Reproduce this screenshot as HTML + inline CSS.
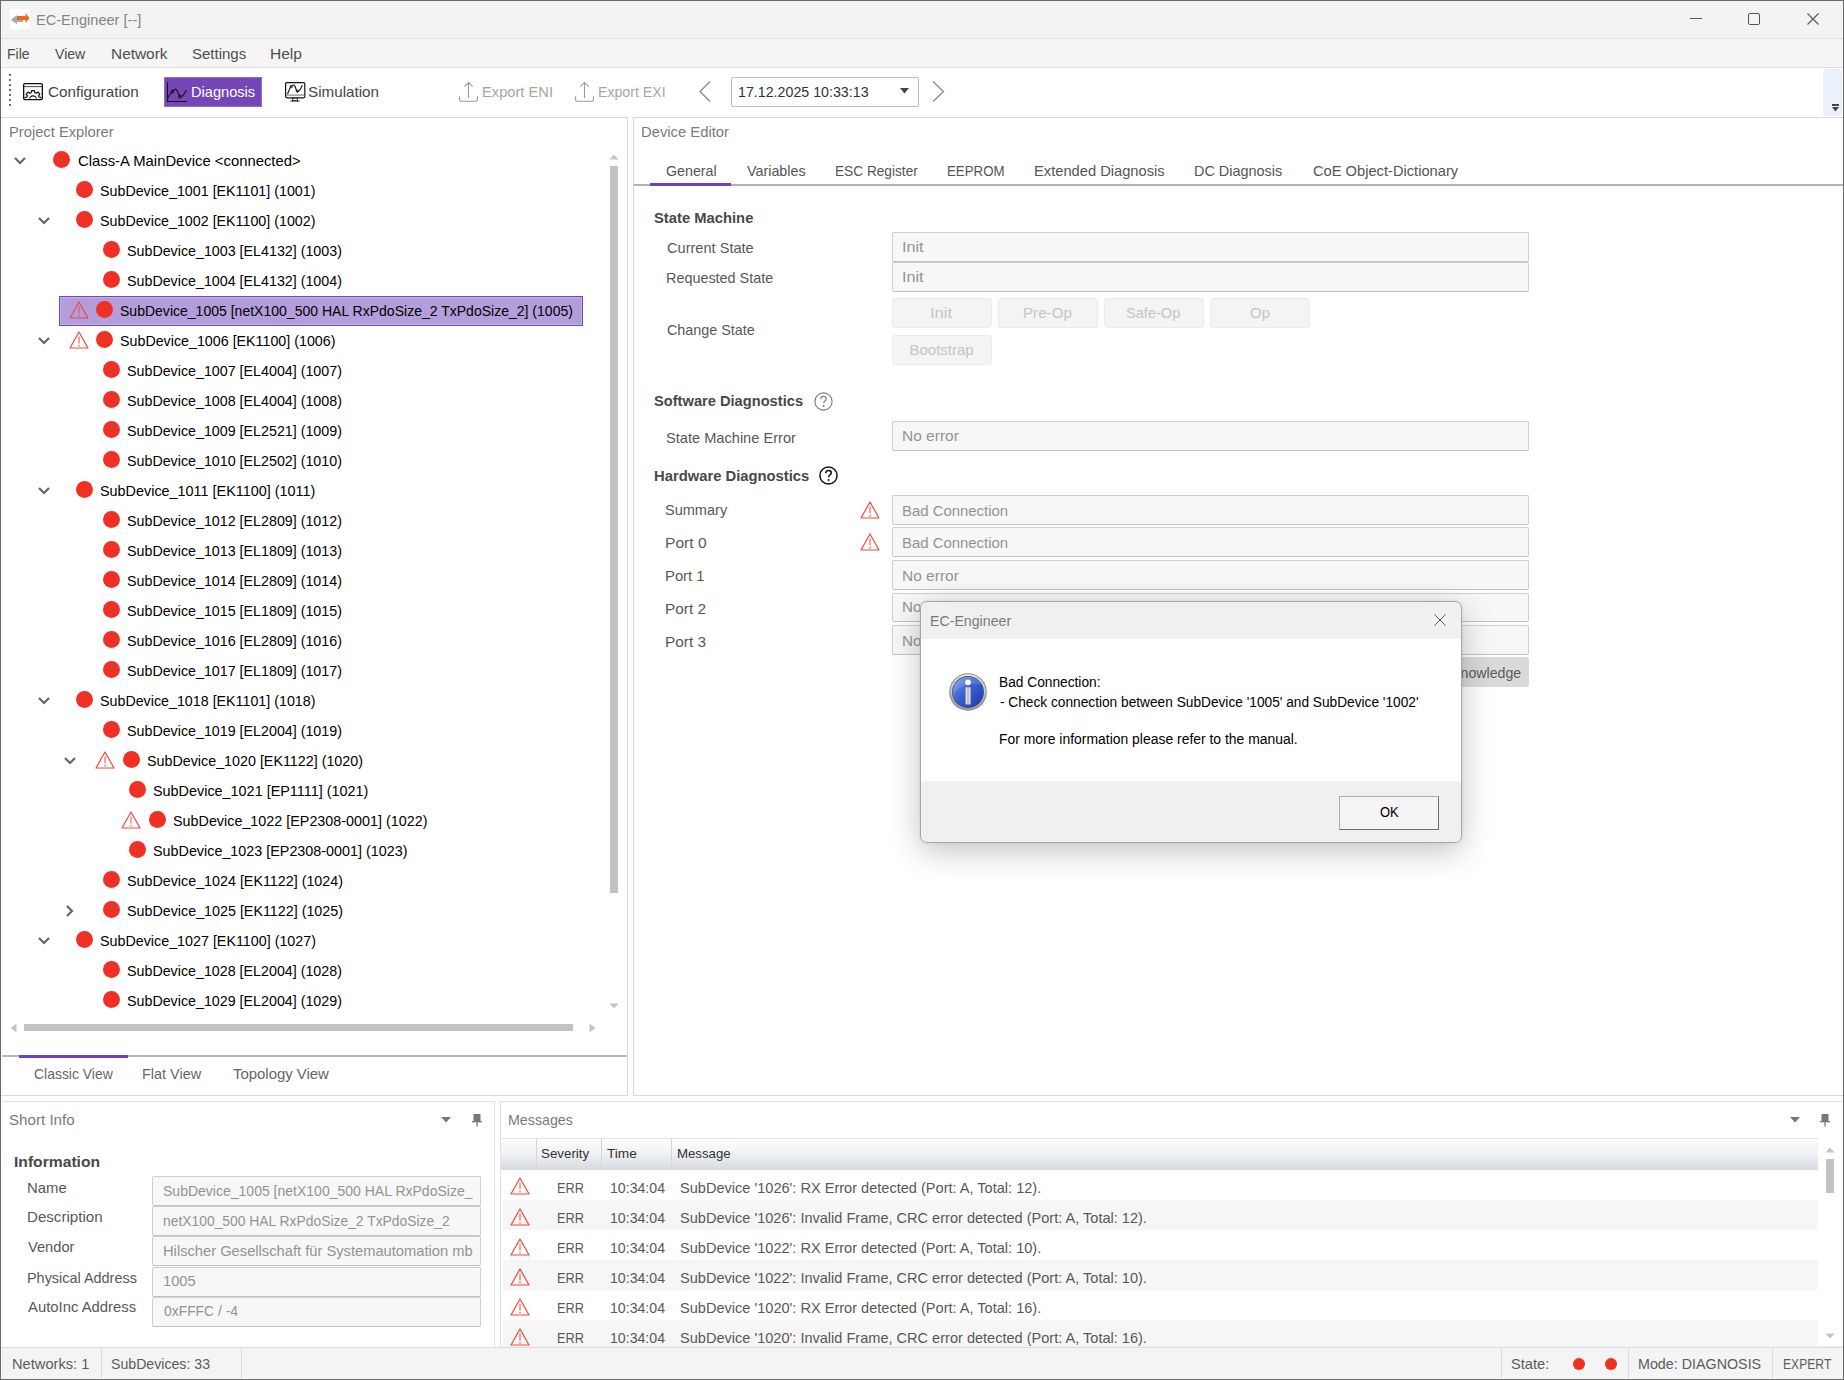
<!DOCTYPE html>
<html><head><meta charset="utf-8"><title>EC-Engineer</title>
<style>
html,body{margin:0;padding:0;}
body{width:1844px;height:1380px;position:relative;overflow:hidden;background:#ffffff;font-family:'Liberation Sans', sans-serif;}
.t{position:absolute;white-space:pre;transform-origin:0 0;font-family:'Liberation Sans', sans-serif;}
svg{overflow:visible}
</style></head><body>
<div style="position:absolute;left:0px;top:0px;width:1844px;height:39px;background:#f3f3f3"></div>
<div style="position:absolute;left:0px;top:38px;width:1844px;height:1px;background:#dfdfdf"></div>
<div style="position:absolute;left:0px;top:39px;width:1844px;height:28px;background:#f5f5f5"></div>
<div style="position:absolute;left:0px;top:67px;width:1844px;height:1px;background:#dfdfdf"></div>
<div style="position:absolute;left:0px;top:68px;width:1844px;height:49px;background:#ffffff"></div>
<div style="position:absolute;left:0px;top:1347px;width:1844px;height:33px;background:#f3f3f3"></div>
<div style="position:absolute;left:0px;top:1347px;width:1844px;height:1px;background:#dcdcdc"></div>
<div style="position:absolute;left:10px;top:9px;width:20px;height:20px;background:#ffffff"></div>
<svg style="position:absolute;left:10px;top:9px;" width="20" height="20" viewBox="0 0 20 20"><path d="M1 10.8 L7 6 L7 10 L13 10 L13 13 L7 13 L7 15.2 Z" fill="#a7abb0"/><path d="M7 7 H15.5 V4 L19.5 9 L15.5 14 V11 H7 Z" fill="#ea6a1f"/></svg>
<div class="t" style="left:36.03px;top:12.00px;font-size:15px;line-height:15px;color:#858585;transform:scaleX(0.9720);">EC-Engineer [--]</div>
<div style="position:absolute;left:1690px;top:18px;width:12px;height:1px;background:#555"></div>
<div style="position:absolute;left:1748px;top:13px;width:12px;height:12px;border:1px solid #555;border-radius:2px;box-sizing:border-box"></div>
<svg style="position:absolute;left:1807px;top:13px;" width="12" height="12" viewBox="0 0 12 12"><path d="M0.5 0.5 L11.5 11.5 M11.5 0.5 L0.5 11.5" stroke="#555" stroke-width="1.1" fill="none"/></svg>
<div class="t" style="left:7.07px;top:46.00px;font-size:15px;line-height:15px;color:#4d4d4d;transform:scaleX(0.9348);">File</div>
<div class="t" style="left:55.00px;top:46.00px;font-size:15px;line-height:15px;color:#4d4d4d;transform:scaleX(0.9394);">View</div>
<div class="t" style="left:110.97px;top:46.00px;font-size:15px;line-height:15px;color:#4d4d4d;transform:scaleX(1.0278);">Network</div>
<div class="t" style="left:192.00px;top:46.00px;font-size:15px;line-height:15px;color:#4d4d4d;transform:scaleX(1.0000);">Settings</div>
<div class="t" style="left:269.97px;top:46.00px;font-size:15px;line-height:15px;color:#4d4d4d;transform:scaleX(1.0333);">Help</div>
<div style="position:absolute;left:9px;top:74px;width:2px;height:2px;background:#6e6e6e"></div>
<div style="position:absolute;left:9px;top:79px;width:2px;height:2px;background:#6e6e6e"></div>
<div style="position:absolute;left:9px;top:84px;width:2px;height:2px;background:#6e6e6e"></div>
<div style="position:absolute;left:9px;top:89px;width:2px;height:2px;background:#6e6e6e"></div>
<div style="position:absolute;left:9px;top:94px;width:2px;height:2px;background:#6e6e6e"></div>
<div style="position:absolute;left:9px;top:99px;width:2px;height:2px;background:#6e6e6e"></div>
<div style="position:absolute;left:9px;top:104px;width:2px;height:2px;background:#6e6e6e"></div>
<svg style="position:absolute;left:23px;top:83px;" width="20" height="17" viewBox="0 0 20 17"><defs><clipPath id="cbx"><rect x="1.5" y="4" width="17" height="11.6"/></clipPath></defs><rect x="0.65" y="0.65" width="18.7" height="15.9" rx="1.2" fill="none" stroke="#111" stroke-width="1.3"/><line x1="1" y1="3.6" x2="19" y2="3.6" stroke="#333" stroke-width="0.9"/><g clip-path="url(#cbx)"><path d="M3.70 17.01 L3.85 17.66 L1.73 17.36 L1.73 14.44 L3.85 14.14 L4.40 12.80 L3.12 11.08 L5.18 9.02 L6.90 10.30 L8.24 9.75 L8.54 7.63 L11.46 7.63 L11.76 9.75 L13.10 10.30 L14.82 9.02 L16.88 11.08 L15.60 12.80 L16.15 14.14 L18.27 14.44 L18.27 17.36 L16.15 17.66 L16.30 17.01" fill="none" stroke="#111" stroke-width="1.15" stroke-linejoin="round"/><path d="M6.4 16.5 A3.6 3.6 0 0 1 13.6 16.5" fill="none" stroke="#111" stroke-width="1.1"/></g></svg>
<div class="t" style="left:48.00px;top:84.00px;font-size:15px;line-height:15px;color:#454545;transform:scaleX(1.0169);">Configuration</div>
<div style="position:absolute;left:164px;top:77px;width:98px;height:30px;background:#7546b8;box-sizing:border-box;border:1px solid #8e6cc8"></div>
<svg style="position:absolute;left:167px;top:82px;" width="21" height="21" viewBox="0 0 21 21"><path d="M0.5 0 V19.5 H20" fill="none" stroke="#111" stroke-width="1.1"/><path d="M0.7 16.3 C2 13.5 3.8 10.8 5.3 9.6 C6.5 8.2 7.6 7.4 8.4 7.4 C10 7.4 11 10 12 12.5 C12.6 14.2 13.3 14.9 14 14.6 C16 14 18 11 19.5 8" fill="none" stroke="#111" stroke-width="1.1"/><circle cx="5.3" cy="9.6" r="1.4" fill="none" stroke="#111" stroke-width="1"/><circle cx="12.8" cy="14.7" r="1.4" fill="none" stroke="#111" stroke-width="1"/></svg>
<div class="t" style="left:191.03px;top:84.00px;font-size:15px;line-height:15px;color:#ffffff;transform:scaleX(0.9738);">Diagnosis</div>
<svg style="position:absolute;left:285px;top:82px;" width="21" height="21" viewBox="0 0 21 21"><rect x="0.6" y="0.6" width="19.2" height="15.2" rx="1.2" fill="none" stroke="#111" stroke-width="1.2"/><line x1="1" y1="13.1" x2="19.4" y2="13.1" stroke="#777" stroke-width="1.1"/><path d="M2.5 12 L5.3 5.6 C6.3 3.6 7.3 3 8.4 3 C10 3 10.5 5 11 7 C11.5 9 12 10 13 9.5 C14.5 9 16 6 17.4 3.2" fill="none" stroke="#111" stroke-width="1.1"/><circle cx="6.3" cy="4.6" r="1.1" fill="none" stroke="#111" stroke-width="0.9"/><circle cx="12.3" cy="9" r="1.1" fill="none" stroke="#111" stroke-width="0.9"/><rect x="7.5" y="16" width="5" height="2.6" fill="none" stroke="#333" stroke-width="1"/><line x1="5.2" y1="19.1" x2="14.8" y2="19.1" stroke="#333" stroke-width="1"/></svg>
<div class="t" style="left:307.99px;top:84.00px;font-size:15px;line-height:15px;color:#454545;transform:scaleX(1.0145);">Simulation</div>
<svg style="position:absolute;left:459px;top:82px;" width="19" height="20" viewBox="0 0 19 20"><path d="M9.5 0.8 V16.1 M5.3 4.6 L9.5 0.5 L13.7 4.6" fill="none" stroke="#9c9c9c" stroke-width="1.1"/><path d="M0.6 14.3 V17.8 Q0.6 19.3 2.1 19.3 H16.9 Q18.4 19.3 18.4 17.8 V14.3" fill="none" stroke="#9c9c9c" stroke-width="1.1"/></svg>
<svg style="position:absolute;left:575px;top:82px;" width="19" height="20" viewBox="0 0 19 20"><path d="M9.5 0.8 V16.1 M5.3 4.6 L9.5 0.5 L13.7 4.6" fill="none" stroke="#9c9c9c" stroke-width="1.1"/><path d="M0.6 14.3 V17.8 Q0.6 19.3 2.1 19.3 H16.9 Q18.4 19.3 18.4 17.8 V14.3" fill="none" stroke="#9c9c9c" stroke-width="1.1"/></svg>
<div class="t" style="left:481.52px;top:84.00px;font-size:15px;line-height:15px;color:#a6a6a6;transform:scaleX(0.9786);">Export ENI</div>
<div class="t" style="left:598.06px;top:84.00px;font-size:15px;line-height:15px;color:#a6a6a6;transform:scaleX(0.9429);">Export EXI</div>
<svg style="position:absolute;left:699px;top:81px;" width="12" height="21" viewBox="0 0 12 21"><path d="M11 0.5 L1 10.5 L11 20.5" fill="none" stroke="#8a8a8a" stroke-width="1.3"/></svg>
<svg style="position:absolute;left:932px;top:81px;" width="13" height="21" viewBox="0 0 13 21"><path d="M1 0.5 L11.5 10.5 L1 20.5" fill="none" stroke="#8a8a8a" stroke-width="1.3"/></svg>
<div style="position:absolute;left:731px;top:77px;width:188px;height:30px;border:1px solid #bdbdbd;border-radius:2px;box-sizing:border-box;background:#fff"></div>
<div class="t" style="left:738.05px;top:84.00px;font-size:15px;line-height:15px;color:#333;transform:scaleX(0.9485);">17.12.2025 10:33:13</div>
<svg style="position:absolute;left:900px;top:88px;" width="9" height="6" viewBox="0 0 9 6"><path d="M0 0 H9 L4.5 5.5 Z" fill="#444"/></svg>
<div style="position:absolute;left:1823px;top:69px;width:19px;height:47px;background:#eaf1fb;border-radius:3px"></div>
<div style="position:absolute;left:1832px;top:104px;width:7px;height:1.5px;background:#444"></div>
<svg style="position:absolute;left:1832px;top:107px;" width="7" height="5" viewBox="0 0 7 5"><path d="M0 0 H7 L3.5 4.5 Z" fill="#444"/></svg>
<div style="position:absolute;left:0px;top:117px;width:628px;height:1px;background:#dadada"></div>
<div style="position:absolute;left:627px;top:117px;width:1px;height:979px;background:#dadada"></div>
<div style="position:absolute;left:0px;top:1095px;width:628px;height:1px;background:#dadada"></div>
<div class="t" style="left:9.02px;top:124.00px;font-size:15px;line-height:15px;color:#7a7a7a;transform:scaleX(0.9811);">Project Explorer</div>
<div style="position:absolute;left:59px;top:296px;width:524px;height:30px;background:#b39ddb;border:1px solid #7446b8;box-sizing:border-box;box-shadow:inset 0 0 0 1px #c4b2e4"></div>
<svg style="position:absolute;left:14px;top:157px;" width="12" height="8" viewBox="0 0 12 8"><path d="M1 1 L6 6 L11 1" fill="none" stroke="#666" stroke-width="2.2"/></svg>
<div style="position:absolute;left:52.5px;top:151.0px;width:17px;height:17px;background:#ee3124;border-radius:50%"></div>
<div class="t" style="left:77.50px;top:153.00px;font-size:15px;line-height:15px;color:#000;transform:scaleX(0.9889);">Class-A MainDevice &lt;connected&gt;</div>
<div style="position:absolute;left:76.0px;top:181.0px;width:17px;height:17px;background:#ee3124;border-radius:50%"></div>
<div class="t" style="left:100.30px;top:183.00px;font-size:15px;line-height:15px;color:#000;transform:scaleX(0.9511);">SubDevice_1001 [EK1101] (1001)</div>
<svg style="position:absolute;left:37.6px;top:217px;" width="12" height="8" viewBox="0 0 12 8"><path d="M1 1 L6 6 L11 1" fill="none" stroke="#666" stroke-width="2.2"/></svg>
<div style="position:absolute;left:76.0px;top:211.0px;width:17px;height:17px;background:#ee3124;border-radius:50%"></div>
<div class="t" style="left:100.30px;top:213.00px;font-size:15px;line-height:15px;color:#000;transform:scaleX(0.9511);">SubDevice_1002 [EK1100] (1002)</div>
<div style="position:absolute;left:102.5px;top:241.0px;width:17px;height:17px;background:#ee3124;border-radius:50%"></div>
<div class="t" style="left:126.55px;top:243.00px;font-size:15px;line-height:15px;color:#000;transform:scaleX(0.9509);">SubDevice_1003 [EL4132] (1003)</div>
<div style="position:absolute;left:102.5px;top:271.0px;width:17px;height:17px;background:#ee3124;border-radius:50%"></div>
<div class="t" style="left:126.55px;top:273.00px;font-size:15px;line-height:15px;color:#000;transform:scaleX(0.9509);">SubDevice_1004 [EL4132] (1004)</div>
<svg style="position:absolute;left:68.9px;top:301px;" width="20" height="18" viewBox="0 0 20 18"><path d="M10.0 1 L19 17 L1 17 Z" fill="none" stroke="#ee4a3a" stroke-width="1.2" stroke-linejoin="round"/><line x1="10.0" y1="5.5" x2="10.0" y2="12.5" stroke="#ee4a3a" stroke-width="1"/><circle cx="10.0" cy="14.8" r="0.8" fill="#ee4a3a"/></svg>
<div style="position:absolute;left:96.0px;top:301.0px;width:17px;height:17px;background:#ee3124;border-radius:50%"></div>
<div class="t" style="left:120.37px;top:303.00px;font-size:15px;line-height:15px;color:#000;transform:scaleX(0.9348);">SubDevice_1005 [netX100_500 HAL RxPdoSize_2 TxPdoSize_2] (1005)</div>
<svg style="position:absolute;left:37.6px;top:337px;" width="12" height="8" viewBox="0 0 12 8"><path d="M1 1 L6 6 L11 1" fill="none" stroke="#666" stroke-width="2.2"/></svg>
<svg style="position:absolute;left:68.9px;top:331px;" width="20" height="18" viewBox="0 0 20 18"><path d="M10.0 1 L19 17 L1 17 Z" fill="none" stroke="#ee4a3a" stroke-width="1.2" stroke-linejoin="round"/><line x1="10.0" y1="5.5" x2="10.0" y2="12.5" stroke="#ee4a3a" stroke-width="1"/><circle cx="10.0" cy="14.8" r="0.8" fill="#ee4a3a"/></svg>
<div style="position:absolute;left:96.0px;top:331.0px;width:17px;height:17px;background:#ee3124;border-radius:50%"></div>
<div class="t" style="left:120.35px;top:333.00px;font-size:15px;line-height:15px;color:#000;transform:scaleX(0.9511);">SubDevice_1006 [EK1100] (1006)</div>
<div style="position:absolute;left:102.5px;top:361.0px;width:17px;height:17px;background:#ee3124;border-radius:50%"></div>
<div class="t" style="left:126.55px;top:363.00px;font-size:15px;line-height:15px;color:#000;transform:scaleX(0.9509);">SubDevice_1007 [EL4004] (1007)</div>
<div style="position:absolute;left:102.5px;top:391.0px;width:17px;height:17px;background:#ee3124;border-radius:50%"></div>
<div class="t" style="left:126.55px;top:393.00px;font-size:15px;line-height:15px;color:#000;transform:scaleX(0.9509);">SubDevice_1008 [EL4004] (1008)</div>
<div style="position:absolute;left:102.5px;top:421.0px;width:17px;height:17px;background:#ee3124;border-radius:50%"></div>
<div class="t" style="left:126.55px;top:423.00px;font-size:15px;line-height:15px;color:#000;transform:scaleX(0.9509);">SubDevice_1009 [EL2521] (1009)</div>
<div style="position:absolute;left:102.5px;top:451.0px;width:17px;height:17px;background:#ee3124;border-radius:50%"></div>
<div class="t" style="left:126.55px;top:453.00px;font-size:15px;line-height:15px;color:#000;transform:scaleX(0.9509);">SubDevice_1010 [EL2502] (1010)</div>
<svg style="position:absolute;left:37.6px;top:487px;" width="12" height="8" viewBox="0 0 12 8"><path d="M1 1 L6 6 L11 1" fill="none" stroke="#666" stroke-width="2.2"/></svg>
<div style="position:absolute;left:76.0px;top:481.0px;width:17px;height:17px;background:#ee3124;border-radius:50%"></div>
<div class="t" style="left:100.29px;top:483.00px;font-size:15px;line-height:15px;color:#000;transform:scaleX(0.9596);">SubDevice_1011 [EK1100] (1011)</div>
<div style="position:absolute;left:102.5px;top:511.0px;width:17px;height:17px;background:#ee3124;border-radius:50%"></div>
<div class="t" style="left:126.55px;top:513.00px;font-size:15px;line-height:15px;color:#000;transform:scaleX(0.9509);">SubDevice_1012 [EL2809] (1012)</div>
<div style="position:absolute;left:102.5px;top:541.0px;width:17px;height:17px;background:#ee3124;border-radius:50%"></div>
<div class="t" style="left:126.55px;top:543.00px;font-size:15px;line-height:15px;color:#000;transform:scaleX(0.9509);">SubDevice_1013 [EL1809] (1013)</div>
<div style="position:absolute;left:102.5px;top:571.0px;width:17px;height:17px;background:#ee3124;border-radius:50%"></div>
<div class="t" style="left:126.55px;top:573.00px;font-size:15px;line-height:15px;color:#000;transform:scaleX(0.9509);">SubDevice_1014 [EL2809] (1014)</div>
<div style="position:absolute;left:102.5px;top:601.0px;width:17px;height:17px;background:#ee3124;border-radius:50%"></div>
<div class="t" style="left:126.55px;top:603.00px;font-size:15px;line-height:15px;color:#000;transform:scaleX(0.9509);">SubDevice_1015 [EL1809] (1015)</div>
<div style="position:absolute;left:102.5px;top:631.0px;width:17px;height:17px;background:#ee3124;border-radius:50%"></div>
<div class="t" style="left:126.55px;top:633.00px;font-size:15px;line-height:15px;color:#000;transform:scaleX(0.9509);">SubDevice_1016 [EL2809] (1016)</div>
<div style="position:absolute;left:102.5px;top:661.0px;width:17px;height:17px;background:#ee3124;border-radius:50%"></div>
<div class="t" style="left:126.55px;top:663.00px;font-size:15px;line-height:15px;color:#000;transform:scaleX(0.9509);">SubDevice_1017 [EL1809] (1017)</div>
<svg style="position:absolute;left:37.6px;top:697px;" width="12" height="8" viewBox="0 0 12 8"><path d="M1 1 L6 6 L11 1" fill="none" stroke="#666" stroke-width="2.2"/></svg>
<div style="position:absolute;left:76.0px;top:691.0px;width:17px;height:17px;background:#ee3124;border-radius:50%"></div>
<div class="t" style="left:100.30px;top:693.00px;font-size:15px;line-height:15px;color:#000;transform:scaleX(0.9511);">SubDevice_1018 [EK1101] (1018)</div>
<div style="position:absolute;left:102.5px;top:721.0px;width:17px;height:17px;background:#ee3124;border-radius:50%"></div>
<div class="t" style="left:126.55px;top:723.00px;font-size:15px;line-height:15px;color:#000;transform:scaleX(0.9509);">SubDevice_1019 [EL2004] (1019)</div>
<svg style="position:absolute;left:64px;top:757px;" width="12" height="8" viewBox="0 0 12 8"><path d="M1 1 L6 6 L11 1" fill="none" stroke="#666" stroke-width="2.2"/></svg>
<svg style="position:absolute;left:95.0px;top:751px;" width="20" height="18" viewBox="0 0 20 18"><path d="M10.0 1 L19 17 L1 17 Z" fill="none" stroke="#ee4a3a" stroke-width="1.2" stroke-linejoin="round"/><line x1="10.0" y1="5.5" x2="10.0" y2="12.5" stroke="#ee4a3a" stroke-width="1"/><circle cx="10.0" cy="14.8" r="0.8" fill="#ee4a3a"/></svg>
<div style="position:absolute;left:122.5px;top:751.0px;width:17px;height:17px;background:#ee3124;border-radius:50%"></div>
<div class="t" style="left:146.55px;top:753.00px;font-size:15px;line-height:15px;color:#000;transform:scaleX(0.9533);">SubDevice_1020 [EK1122] (1020)</div>
<div style="position:absolute;left:128.5px;top:781.0px;width:17px;height:17px;background:#ee3124;border-radius:50%"></div>
<div class="t" style="left:152.84px;top:783.00px;font-size:15px;line-height:15px;color:#000;transform:scaleX(0.9596);">SubDevice_1021 [EP1111] (1021)</div>
<svg style="position:absolute;left:121.0px;top:811px;" width="20" height="18" viewBox="0 0 20 18"><path d="M10.0 1 L19 17 L1 17 Z" fill="none" stroke="#ee4a3a" stroke-width="1.2" stroke-linejoin="round"/><line x1="10.0" y1="5.5" x2="10.0" y2="12.5" stroke="#ee4a3a" stroke-width="1"/><circle cx="10.0" cy="14.8" r="0.8" fill="#ee4a3a"/></svg>
<div style="position:absolute;left:148.5px;top:811.0px;width:17px;height:17px;background:#ee3124;border-radius:50%"></div>
<div class="t" style="left:172.54px;top:813.00px;font-size:15px;line-height:15px;color:#000;transform:scaleX(0.9564);">SubDevice_1022 [EP2308-0001] (1022)</div>
<div style="position:absolute;left:128.5px;top:841.0px;width:17px;height:17px;background:#ee3124;border-radius:50%"></div>
<div class="t" style="left:152.84px;top:843.00px;font-size:15px;line-height:15px;color:#000;transform:scaleX(0.9564);">SubDevice_1023 [EP2308-0001] (1023)</div>
<div style="position:absolute;left:102.5px;top:871.0px;width:17px;height:17px;background:#ee3124;border-radius:50%"></div>
<div class="t" style="left:126.55px;top:873.00px;font-size:15px;line-height:15px;color:#000;transform:scaleX(0.9533);">SubDevice_1024 [EK1122] (1024)</div>
<svg style="position:absolute;left:66px;top:904.5px;" width="8" height="12" viewBox="0 0 8 12"><path d="M1 1 L6 6 L1 11" fill="none" stroke="#666" stroke-width="2.2"/></svg>
<div style="position:absolute;left:102.5px;top:901.0px;width:17px;height:17px;background:#ee3124;border-radius:50%"></div>
<div class="t" style="left:126.55px;top:903.00px;font-size:15px;line-height:15px;color:#000;transform:scaleX(0.9533);">SubDevice_1025 [EK1122] (1025)</div>
<svg style="position:absolute;left:37.6px;top:937px;" width="12" height="8" viewBox="0 0 12 8"><path d="M1 1 L6 6 L11 1" fill="none" stroke="#666" stroke-width="2.2"/></svg>
<div style="position:absolute;left:76.0px;top:931.0px;width:17px;height:17px;background:#ee3124;border-radius:50%"></div>
<div class="t" style="left:100.30px;top:933.00px;font-size:15px;line-height:15px;color:#000;transform:scaleX(0.9533);">SubDevice_1027 [EK1100] (1027)</div>
<div style="position:absolute;left:102.5px;top:961.0px;width:17px;height:17px;background:#ee3124;border-radius:50%"></div>
<div class="t" style="left:126.55px;top:963.00px;font-size:15px;line-height:15px;color:#000;transform:scaleX(0.9509);">SubDevice_1028 [EL2004] (1028)</div>
<div style="position:absolute;left:102.5px;top:991.0px;width:17px;height:17px;background:#ee3124;border-radius:50%"></div>
<div class="t" style="left:126.55px;top:993.00px;font-size:15px;line-height:15px;color:#000;transform:scaleX(0.9509);">SubDevice_1029 [EL2004] (1029)</div>
<svg style="position:absolute;left:609px;top:154px;" width="10" height="6" viewBox="0 0 10 6"><path d="M0.5 5.5 L5 0.5 L9.5 5.5 Z" fill="#c4c4c4"/></svg>
<div style="position:absolute;left:610px;top:166px;width:8px;height:727px;background:#c2c2c2"></div>
<svg style="position:absolute;left:609px;top:1003px;" width="10" height="6" viewBox="0 0 10 6"><path d="M0.5 0.5 L5 5.5 L9.5 0.5 Z" fill="#c4c4c4"/></svg>
<svg style="position:absolute;left:10px;top:1023px;" width="7" height="10" viewBox="0 0 7 10"><path d="M6.5 0.5 L0.5 5 L6.5 9.5 Z" fill="#c4c4c4"/></svg>
<div style="position:absolute;left:24px;top:1024px;width:549px;height:7px;background:#c2c2c2"></div>
<svg style="position:absolute;left:589px;top:1023px;" width="7" height="10" viewBox="0 0 7 10"><path d="M0.5 0.5 L6.5 5 L0.5 9.5 Z" fill="#c4c4c4"/></svg>
<div style="position:absolute;left:2px;top:1055px;width:625px;height:2px;background:#b8b8b8"></div>
<div style="position:absolute;left:19px;top:1055px;width:109px;height:3px;background:#6f3fc0"></div>
<div class="t" style="left:33.70px;top:1066.00px;font-size:15px;line-height:15px;color:#666;transform:scaleX(0.9294);">Classic View</div>
<div class="t" style="left:142.44px;top:1066.00px;font-size:15px;line-height:15px;color:#666;transform:scaleX(0.9639);">Flat View</div>
<div class="t" style="left:232.60px;top:1066.00px;font-size:15px;line-height:15px;color:#666;transform:scaleX(0.9938);">Topology View</div>
<div style="position:absolute;left:633px;top:117px;width:1211px;height:1px;background:#dadada"></div>
<div style="position:absolute;left:633px;top:117px;width:1px;height:979px;background:#dadada"></div>
<div style="position:absolute;left:633px;top:1095px;width:1211px;height:1px;background:#dadada"></div>
<div class="t" style="left:641.01px;top:124.00px;font-size:15px;line-height:15px;color:#7a7a7a;transform:scaleX(0.9858);">Device Editor</div>
<div style="position:absolute;left:634px;top:184px;width:1210px;height:2px;background:#b3b3b3"></div>
<div style="position:absolute;left:650px;top:183px;width:81px;height:3px;background:#6f3fc0"></div>
<div class="t" style="left:665.50px;top:162.50px;font-size:15px;line-height:15px;color:#555555;transform:scaleX(0.9481);">General</div>
<div class="t" style="left:746.75px;top:162.50px;font-size:15px;line-height:15px;color:#555555;transform:scaleX(0.9549);">Variables</div>
<div class="t" style="left:834.59px;top:162.50px;font-size:15px;line-height:15px;color:#555555;transform:scaleX(0.9111);">ESC Register</div>
<div class="t" style="left:947.12px;top:162.50px;font-size:15px;line-height:15px;color:#555555;transform:scaleX(0.8849);">EEPROM</div>
<div class="t" style="left:1034.02px;top:162.50px;font-size:15px;line-height:15px;color:#555555;transform:scaleX(0.9792);">Extended Diagnosis</div>
<div class="t" style="left:1194.04px;top:162.50px;font-size:15px;line-height:15px;color:#555555;transform:scaleX(0.9615);">DC Diagnosis</div>
<div class="t" style="left:1313.00px;top:162.50px;font-size:15px;line-height:15px;color:#555555;transform:scaleX(0.9782);">CoE Object-Dictionary</div>
<div class="t" style="left:654.25px;top:209.50px;font-size:15px;line-height:15px;color:#484848;font-weight:700;transform:scaleX(0.9851);">State Machine</div>
<div class="t" style="left:666.75px;top:240.25px;font-size:15px;line-height:15px;color:#585858;transform:scaleX(0.9719);">Current State</div>
<div class="t" style="left:665.79px;top:269.60px;font-size:15px;line-height:15px;color:#585858;transform:scaleX(0.9595);">Requested State</div>
<div class="t" style="left:666.75px;top:322.00px;font-size:15px;line-height:15px;color:#585858;transform:scaleX(0.9565);">Change State</div>
<div style="position:absolute;left:892px;top:232px;width:637px;height:30px;background:#f7f7f7;border:1px solid #cfcfcf;border-bottom:1px solid #c3c3c3;border-radius:2px;box-sizing:border-box"></div>
<div class="t" style="left:902.32px;top:239.00px;font-size:15px;line-height:15px;color:#939393;transform:scaleX(1.0789);">Init</div>
<div style="position:absolute;left:892px;top:262px;width:637px;height:30px;background:#f7f7f7;border:1px solid #cfcfcf;border-bottom:1px solid #c3c3c3;border-radius:2px;box-sizing:border-box"></div>
<div class="t" style="left:902.32px;top:269.00px;font-size:15px;line-height:15px;color:#939393;transform:scaleX(1.0789);">Init</div>
<div style="position:absolute;left:892px;top:298px;width:100px;height:30px;background:#f4f4f4;border:1px solid #ebebeb;box-sizing:border-box;border-radius:3px"></div>
<div class="t" style="left:930.39px;top:305.00px;font-size:15px;line-height:15px;color:#c4c4c4;transform:scaleX(1.1053);">Init</div>
<div style="position:absolute;left:998px;top:298px;width:100px;height:30px;background:#f4f4f4;border:1px solid #ebebeb;box-sizing:border-box;border-radius:3px"></div>
<div class="t" style="left:1023.24px;top:305.00px;font-size:15px;line-height:15px;color:#c4c4c4;transform:scaleX(1.0106);">Pre-Op</div>
<div style="position:absolute;left:1104px;top:298px;width:100px;height:30px;background:#f4f4f4;border:1px solid #ebebeb;box-sizing:border-box;border-radius:3px"></div>
<div class="t" style="left:1126.28px;top:305.00px;font-size:15px;line-height:15px;color:#c4c4c4;transform:scaleX(0.9727);">Safe-Op</div>
<div style="position:absolute;left:1210px;top:298px;width:100px;height:30px;background:#f4f4f4;border:1px solid #ebebeb;box-sizing:border-box;border-radius:3px"></div>
<div class="t" style="left:1250.00px;top:305.00px;font-size:15px;line-height:15px;color:#c4c4c4;transform:scaleX(1.0000);">Op</div>
<div style="position:absolute;left:892px;top:335px;width:100px;height:30px;background:#f4f4f4;border:1px solid #ebebeb;box-sizing:border-box;border-radius:3px"></div>
<div class="t" style="left:909.50px;top:342.00px;font-size:15px;line-height:15px;color:#c4c4c4;transform:scaleX(1.0000);">Bootstrap</div>
<div class="t" style="left:654.00px;top:393.00px;font-size:15px;line-height:15px;color:#484848;font-weight:700;transform:scaleX(0.9770);">Software Diagnostics</div>
<svg style="position:absolute;left:813.5px;top:391.5px;" width="19" height="19" viewBox="0 0 19 19"><circle cx="9.5" cy="9.5" r="8.6" fill="none" stroke="#7a7a7a" stroke-width="1.1"/><path d="M6.7 7.3 C6.7 5.2 8 4.4 9.5 4.4 C11.1 4.4 12.3 5.4 12.3 6.9 C12.3 8.6 9.6 9.0 9.6 11.2" fill="none" stroke="#7a7a7a" stroke-width="1.1"/><circle cx="9.6" cy="13.9" r="1" fill="#7a7a7a"/></svg>
<div class="t" style="left:665.78px;top:429.50px;font-size:15px;line-height:15px;color:#585858;transform:scaleX(0.9737);">State Machine Error</div>
<div style="position:absolute;left:892px;top:421px;width:637px;height:30px;background:#f7f7f7;border:1px solid #cfcfcf;border-bottom:1px solid #c3c3c3;border-radius:2px;box-sizing:border-box"></div>
<div class="t" style="left:902.37px;top:428.00px;font-size:15px;line-height:15px;color:#939393;transform:scaleX(1.0333);">No error</div>
<div class="t" style="left:653.51px;top:468.00px;font-size:15px;line-height:15px;color:#484848;font-weight:700;transform:scaleX(0.9853);">Hardware Diagnostics</div>
<svg style="position:absolute;left:818.5px;top:465.5px;" width="19" height="19" viewBox="0 0 19 19"><circle cx="9.5" cy="9.5" r="8.6" fill="none" stroke="#111" stroke-width="1.5"/><path d="M6.7 7.3 C6.7 5.2 8 4.4 9.5 4.4 C11.1 4.4 12.3 5.4 12.3 6.9 C12.3 8.6 9.6 9.0 9.6 11.2" fill="none" stroke="#111" stroke-width="1.5"/><circle cx="9.6" cy="13.9" r="1" fill="#111"/></svg>
<div class="t" style="left:665.33px;top:502.00px;font-size:15px;line-height:15px;color:#585858;transform:scaleX(0.9683);">Summary</div>
<div class="t" style="left:665.26px;top:535.20px;font-size:15px;line-height:15px;color:#585858;transform:scaleX(1.0385);">Port 0</div>
<div class="t" style="left:665.31px;top:568.10px;font-size:15px;line-height:15px;color:#585858;transform:scaleX(0.9872);">Port 1</div>
<div class="t" style="left:665.27px;top:600.80px;font-size:15px;line-height:15px;color:#585858;transform:scaleX(1.0256);">Port 2</div>
<div class="t" style="left:665.27px;top:633.70px;font-size:15px;line-height:15px;color:#585858;transform:scaleX(1.0256);">Port 3</div>
<svg style="position:absolute;left:860.0px;top:501px;" width="20" height="18" viewBox="0 0 20 18"><path d="M10.0 1 L19 17 L1 17 Z" fill="none" stroke="#ee4a3a" stroke-width="1.2" stroke-linejoin="round"/><line x1="10.0" y1="5.5" x2="10.0" y2="12.5" stroke="#ee4a3a" stroke-width="1"/><circle cx="10.0" cy="14.8" r="0.8" fill="#ee4a3a"/></svg>
<svg style="position:absolute;left:860.0px;top:533px;" width="20" height="18" viewBox="0 0 20 18"><path d="M10.0 1 L19 17 L1 17 Z" fill="none" stroke="#ee4a3a" stroke-width="1.2" stroke-linejoin="round"/><line x1="10.0" y1="5.5" x2="10.0" y2="12.5" stroke="#ee4a3a" stroke-width="1"/><circle cx="10.0" cy="14.8" r="0.8" fill="#ee4a3a"/></svg>
<div style="position:absolute;left:892px;top:495px;width:637px;height:30px;background:#f7f7f7;border:1px solid #cfcfcf;border-bottom:1px solid #c3c3c3;border-radius:2px;box-sizing:border-box"></div>
<div class="t" style="left:902.01px;top:502.60px;font-size:15px;line-height:15px;color:#939393;transform:scaleX(0.9933);">Bad Connection</div>
<div style="position:absolute;left:892px;top:527px;width:637px;height:30px;background:#f7f7f7;border:1px solid #cfcfcf;border-bottom:1px solid #c3c3c3;border-radius:2px;box-sizing:border-box"></div>
<div class="t" style="left:902.01px;top:534.50px;font-size:15px;line-height:15px;color:#939393;transform:scaleX(0.9933);">Bad Connection</div>
<div style="position:absolute;left:892px;top:560px;width:637px;height:30px;background:#f7f7f7;border:1px solid #cfcfcf;border-bottom:1px solid #c3c3c3;border-radius:2px;box-sizing:border-box"></div>
<div class="t" style="left:901.97px;top:567.50px;font-size:15px;line-height:15px;color:#939393;transform:scaleX(1.0333);">No error</div>
<div style="position:absolute;left:892px;top:593px;width:637px;height:29px;background:#f7f7f7;border:1px solid #cfcfcf;border-bottom:1px solid #c3c3c3;border-radius:2px;box-sizing:border-box"></div>
<div class="t" style="left:901.99px;top:599.00px;font-size:15px;line-height:15px;color:#939393;transform:scaleX(1.0116);">Not available</div>
<div style="position:absolute;left:892px;top:625px;width:637px;height:30px;background:#f7f7f7;border:1px solid #cfcfcf;border-bottom:1px solid #c3c3c3;border-radius:2px;box-sizing:border-box"></div>
<div class="t" style="left:901.99px;top:633.00px;font-size:15px;line-height:15px;color:#939393;transform:scaleX(1.0116);">Not available</div>
<div style="position:absolute;left:1420px;top:657px;width:109px;height:30px;background:#dadada;border-radius:2px"></div>
<div class="t" style="left:1437.00px;top:665.00px;font-size:15px;line-height:15px;color:#5a5a5a;transform:scaleX(0.9438);">Acknowledge</div>
<div style="position:absolute;left:2px;top:1101px;width:493px;height:1px;background:#e1e1e1"></div>
<div style="position:absolute;left:494px;top:1101px;width:1px;height:246px;background:#e1e1e1"></div>
<div class="t" style="left:8.99px;top:1112.20px;font-size:15px;line-height:15px;color:#7a7a7a;transform:scaleX(1.0094);">Short Info</div>
<svg style="position:absolute;left:441px;top:1117px;" width="10" height="6" viewBox="0 0 10 6"><path d="M0 0 H10 L5 5.5 Z" fill="#777"/></svg>
<svg style="position:absolute;left:472px;top:1114px;" width="10" height="13" viewBox="0 0 10 13"><rect x="1.5" y="0" width="7" height="7" fill="#777"/><rect x="0" y="7" width="10" height="1.3" fill="#777"/><rect x="4.4" y="8" width="1.3" height="4.5" fill="#777"/></svg>
<div class="t" style="left:13.96px;top:1153.50px;font-size:15px;line-height:15px;color:#484848;font-weight:700;transform:scaleX(1.0432);">Information</div>
<div class="t" style="left:26.71px;top:1179.50px;font-size:15px;line-height:15px;color:#585858;transform:scaleX(0.9923);">Name</div>
<div style="position:absolute;left:152px;top:1176px;width:329px;height:30px;background:#f7f7f7;border:1px solid #cfcfcf;border-bottom-color:#c3c3c3;border-radius:2px;box-sizing:border-box;overflow:hidden">
</div>
<div style="position:absolute;left:153px;top:1176px;width:320px;height:29px;overflow:hidden"><div class="t" style="left:9.68px;top:7.30px;font-size:15px;line-height:15px;color:#939393;transform:scaleX(0.934);">SubDevice_1005 [netX100_500 HAL RxPdoSize_2 TxPdoSize_2] (1005)</div></div>
<div class="t" style="left:26.69px;top:1209.30px;font-size:15px;line-height:15px;color:#585858;transform:scaleX(1.0068);">Description</div>
<div style="position:absolute;left:152px;top:1206px;width:329px;height:30px;background:#f7f7f7;border:1px solid #cfcfcf;border-bottom-color:#c3c3c3;border-radius:2px;box-sizing:border-box;overflow:hidden">
</div>
<div class="t" style="left:162.88px;top:1213.10px;font-size:15px;line-height:15px;color:#939393;transform:scaleX(0.9239);">netX100_500 HAL RxPdoSize_2 TxPdoSize_2</div>
<div class="t" style="left:27.70px;top:1239.10px;font-size:15px;line-height:15px;color:#585858;transform:scaleX(0.9771);">Vendor</div>
<div style="position:absolute;left:152px;top:1236px;width:329px;height:30px;background:#f7f7f7;border:1px solid #cfcfcf;border-bottom-color:#c3c3c3;border-radius:2px;box-sizing:border-box;overflow:hidden">
</div>
<div style="position:absolute;left:153px;top:1236px;width:320px;height:29px;overflow:hidden"><div class="t" style="left:9.62px;top:7.00px;font-size:15px;line-height:15px;color:#939393;transform:scaleX(0.98);">Hilscher Gesellschaft für Systemautomation mbH</div></div>
<div class="t" style="left:26.74px;top:1269.50px;font-size:15px;line-height:15px;color:#585858;transform:scaleX(0.9619);">Physical Address</div>
<div style="position:absolute;left:152px;top:1267px;width:329px;height:30px;background:#f7f7f7;border:1px solid #cfcfcf;border-bottom-color:#c3c3c3;border-radius:2px;box-sizing:border-box;overflow:hidden">
</div>
<div class="t" style="left:162.82px;top:1272.80px;font-size:15px;line-height:15px;color:#939393;transform:scaleX(0.9812);">1005</div>
<div class="t" style="left:27.70px;top:1299.30px;font-size:15px;line-height:15px;color:#585858;transform:scaleX(0.9899);">AutoInc Address</div>
<div style="position:absolute;left:152px;top:1297px;width:329px;height:30px;background:#f7f7f7;border:1px solid #cfcfcf;border-bottom-color:#c3c3c3;border-radius:2px;box-sizing:border-box;overflow:hidden">
</div>
<div class="t" style="left:163.80px;top:1302.90px;font-size:15px;line-height:15px;color:#939393;transform:scaleX(0.9250);">0xFFFC / -4</div>
<div style="position:absolute;left:500px;top:1101px;width:1344px;height:1px;background:#e1e1e1"></div>
<div style="position:absolute;left:500px;top:1101px;width:1px;height:246px;background:#e1e1e1"></div>
<div class="t" style="left:508.35px;top:1112.00px;font-size:15px;line-height:15px;color:#7a7a7a;transform:scaleX(0.9493);">Messages</div>
<svg style="position:absolute;left:1789.5px;top:1117px;" width="10" height="6" viewBox="0 0 10 6"><path d="M0 0 H10 L5 5.5 Z" fill="#777"/></svg>
<svg style="position:absolute;left:1820px;top:1114px;" width="10" height="13" viewBox="0 0 10 13"><rect x="1.5" y="0" width="7" height="7" fill="#777"/><rect x="0" y="7" width="10" height="1.3" fill="#777"/><rect x="4.4" y="8" width="1.3" height="4.5" fill="#777"/></svg>
<div style="position:absolute;left:501px;top:1138px;width:1317px;height:1px;background:#e3e3e3"></div>
<div style="position:absolute;left:501px;top:1139px;width:1317px;height:31px;background:linear-gradient(#fdfdfe,#f1f2f4 45%,#d6dadf)"></div>
<div style="position:absolute;left:536px;top:1139px;width:1px;height:31px;background:#d3d6da"></div>
<div style="position:absolute;left:601px;top:1139px;width:1px;height:31px;background:#d3d6da"></div>
<div style="position:absolute;left:671px;top:1139px;width:1px;height:31px;background:#d3d6da"></div>
<div class="t" style="left:541.31px;top:1146.50px;font-size:13.5px;line-height:13.5px;color:#333;transform:scaleX(0.9875);">Severity</div>
<div class="t" style="left:607.20px;top:1146.50px;font-size:13.5px;line-height:13.5px;color:#333;transform:scaleX(1.0103);">Time</div>
<div class="t" style="left:676.52px;top:1146.50px;font-size:13.5px;line-height:13.5px;color:#333;transform:scaleX(0.9778);">Message</div>
<div style="position:absolute;left:503px;top:1200px;width:1315px;height:30px;background:#f6f6f6"></div>
<div style="position:absolute;left:503px;top:1260px;width:1315px;height:30px;background:#f6f6f6"></div>
<div style="position:absolute;left:503px;top:1320px;width:1315px;height:30px;background:#f6f6f6"></div>
<svg style="position:absolute;left:510.0px;top:1177.4px;" width="20" height="18" viewBox="0 0 20 18"><path d="M10.0 1 L19 17 L1 17 Z" fill="none" stroke="#ee4a3a" stroke-width="1.2" stroke-linejoin="round"/><line x1="10.0" y1="5.5" x2="10.0" y2="12.5" stroke="#ee4a3a" stroke-width="1"/><circle cx="10.0" cy="14.8" r="0.8" fill="#ee4a3a"/></svg>
<div class="t" style="left:556.65px;top:1179.80px;font-size:15px;line-height:15px;color:#585858;transform:scaleX(0.8500);">ERR</div>
<div class="t" style="left:610.26px;top:1179.80px;font-size:15px;line-height:15px;color:#585858;transform:scaleX(0.9421);">10:34:04</div>
<div class="t" style="left:679.63px;top:1179.80px;font-size:15px;line-height:15px;color:#585858;transform:scaleX(0.9703);">SubDevice &#x27;1026&#x27;: RX Error detected (Port: A, Total: 12).</div>
<svg style="position:absolute;left:510.0px;top:1207.5px;" width="20" height="18" viewBox="0 0 20 18"><path d="M10.0 1 L19 17 L1 17 Z" fill="none" stroke="#ee4a3a" stroke-width="1.2" stroke-linejoin="round"/><line x1="10.0" y1="5.5" x2="10.0" y2="12.5" stroke="#ee4a3a" stroke-width="1"/><circle cx="10.0" cy="14.8" r="0.8" fill="#ee4a3a"/></svg>
<div class="t" style="left:556.65px;top:1209.90px;font-size:15px;line-height:15px;color:#585858;transform:scaleX(0.8500);">ERR</div>
<div class="t" style="left:610.26px;top:1209.90px;font-size:15px;line-height:15px;color:#585858;transform:scaleX(0.9421);">10:34:04</div>
<div class="t" style="left:679.63px;top:1209.90px;font-size:15px;line-height:15px;color:#585858;transform:scaleX(0.9697);">SubDevice &#x27;1026&#x27;: Invalid Frame, CRC error detected (Port: A, Total: 12).</div>
<svg style="position:absolute;left:510.0px;top:1237.6000000000001px;" width="20" height="18" viewBox="0 0 20 18"><path d="M10.0 1 L19 17 L1 17 Z" fill="none" stroke="#ee4a3a" stroke-width="1.2" stroke-linejoin="round"/><line x1="10.0" y1="5.5" x2="10.0" y2="12.5" stroke="#ee4a3a" stroke-width="1"/><circle cx="10.0" cy="14.8" r="0.8" fill="#ee4a3a"/></svg>
<div class="t" style="left:556.65px;top:1240.00px;font-size:15px;line-height:15px;color:#585858;transform:scaleX(0.8500);">ERR</div>
<div class="t" style="left:610.26px;top:1240.00px;font-size:15px;line-height:15px;color:#585858;transform:scaleX(0.9421);">10:34:04</div>
<div class="t" style="left:679.63px;top:1240.00px;font-size:15px;line-height:15px;color:#585858;transform:scaleX(0.9703);">SubDevice &#x27;1022&#x27;: RX Error detected (Port: A, Total: 10).</div>
<svg style="position:absolute;left:510.0px;top:1267.7px;" width="20" height="18" viewBox="0 0 20 18"><path d="M10.0 1 L19 17 L1 17 Z" fill="none" stroke="#ee4a3a" stroke-width="1.2" stroke-linejoin="round"/><line x1="10.0" y1="5.5" x2="10.0" y2="12.5" stroke="#ee4a3a" stroke-width="1"/><circle cx="10.0" cy="14.8" r="0.8" fill="#ee4a3a"/></svg>
<div class="t" style="left:556.65px;top:1270.10px;font-size:15px;line-height:15px;color:#585858;transform:scaleX(0.8500);">ERR</div>
<div class="t" style="left:610.26px;top:1270.10px;font-size:15px;line-height:15px;color:#585858;transform:scaleX(0.9421);">10:34:04</div>
<div class="t" style="left:679.63px;top:1270.10px;font-size:15px;line-height:15px;color:#585858;transform:scaleX(0.9697);">SubDevice &#x27;1022&#x27;: Invalid Frame, CRC error detected (Port: A, Total: 10).</div>
<svg style="position:absolute;left:510.0px;top:1297.8000000000002px;" width="20" height="18" viewBox="0 0 20 18"><path d="M10.0 1 L19 17 L1 17 Z" fill="none" stroke="#ee4a3a" stroke-width="1.2" stroke-linejoin="round"/><line x1="10.0" y1="5.5" x2="10.0" y2="12.5" stroke="#ee4a3a" stroke-width="1"/><circle cx="10.0" cy="14.8" r="0.8" fill="#ee4a3a"/></svg>
<div class="t" style="left:556.65px;top:1300.20px;font-size:15px;line-height:15px;color:#585858;transform:scaleX(0.8500);">ERR</div>
<div class="t" style="left:610.26px;top:1300.20px;font-size:15px;line-height:15px;color:#585858;transform:scaleX(0.9421);">10:34:04</div>
<div class="t" style="left:679.63px;top:1300.20px;font-size:15px;line-height:15px;color:#585858;transform:scaleX(0.9703);">SubDevice &#x27;1020&#x27;: RX Error detected (Port: A, Total: 16).</div>
<svg style="position:absolute;left:510.0px;top:1327.9px;" width="20" height="18" viewBox="0 0 20 18"><path d="M10.0 1 L19 17 L1 17 Z" fill="none" stroke="#ee4a3a" stroke-width="1.2" stroke-linejoin="round"/><line x1="10.0" y1="5.5" x2="10.0" y2="12.5" stroke="#ee4a3a" stroke-width="1"/><circle cx="10.0" cy="14.8" r="0.8" fill="#ee4a3a"/></svg>
<div class="t" style="left:556.65px;top:1330.30px;font-size:15px;line-height:15px;color:#585858;transform:scaleX(0.8500);">ERR</div>
<div class="t" style="left:610.26px;top:1330.30px;font-size:15px;line-height:15px;color:#585858;transform:scaleX(0.9421);">10:34:04</div>
<div class="t" style="left:679.63px;top:1330.30px;font-size:15px;line-height:15px;color:#585858;transform:scaleX(0.9697);">SubDevice &#x27;1020&#x27;: Invalid Frame, CRC error detected (Port: A, Total: 16).</div>
<div style="position:absolute;left:501px;top:1346px;width:1343px;height:1px;background:#f3f3f3"></div>
<svg style="position:absolute;left:1825px;top:1147px;" width="10" height="6" viewBox="0 0 10 6"><path d="M0.5 5.5 L5 0.5 L9.5 5.5 Z" fill="#c4c4c4"/></svg>
<div style="position:absolute;left:1826px;top:1159px;width:8px;height:34px;background:#c2c2c2"></div>
<svg style="position:absolute;left:1825px;top:1333px;" width="10" height="6" viewBox="0 0 10 6"><path d="M0.5 0.5 L5 5.5 L9.5 0.5 Z" fill="#c4c4c4"/></svg>
<div style="position:absolute;left:0px;top:1347px;width:1844px;height:33px;background:#f4f4f4"></div>
<div style="position:absolute;left:0px;top:1347px;width:1844px;height:1px;background:#dcdcdc"></div>
<div style="position:absolute;left:101px;top:1348px;width:1px;height:30px;background:#dcdcdc"></div>
<div style="position:absolute;left:241px;top:1348px;width:1px;height:30px;background:#dcdcdc"></div>
<div style="position:absolute;left:1501px;top:1348px;width:1px;height:30px;background:#dcdcdc"></div>
<div style="position:absolute;left:1628px;top:1348px;width:1px;height:30px;background:#dcdcdc"></div>
<div style="position:absolute;left:1772px;top:1348px;width:1px;height:30px;background:#dcdcdc"></div>
<div class="t" style="left:12.02px;top:1355.60px;font-size:15px;line-height:15px;color:#5c5c5c;transform:scaleX(0.9769);">Networks: 1</div>
<div class="t" style="left:111.36px;top:1355.60px;font-size:15px;line-height:15px;color:#5c5c5c;transform:scaleX(0.9423);">SubDevices: 33</div>
<div class="t" style="left:1511.32px;top:1355.60px;font-size:15px;line-height:15px;color:#5c5c5c;transform:scaleX(0.9784);">State:</div>
<div style="position:absolute;left:1573.0px;top:1358.0px;width:12px;height:12px;background:#ee3124;border-radius:50%"></div>
<div style="position:absolute;left:1605.0px;top:1358.0px;width:12px;height:12px;background:#ee3124;border-radius:50%"></div>
<div class="t" style="left:1638.45px;top:1355.60px;font-size:15px;line-height:15px;color:#5c5c5c;transform:scaleX(0.9531);">Mode: DIAGNOSIS</div>
<div class="t" style="left:1782.59px;top:1355.60px;font-size:15px;line-height:15px;color:#5c5c5c;transform:scaleX(0.8085);">EXPERT</div>
<div style="position:absolute;left:920px;top:601px;width:542px;height:242px;border-radius:7px;box-shadow:0 8px 32px rgba(0,0,0,0.24),0 0 3px rgba(0,0,0,0.10);background:#f0f0f0"></div>
<div style="position:absolute;left:920px;top:601px;width:542px;height:242px;border-radius:7px;overflow:hidden;border:1px solid #a8a8a8;box-sizing:border-box;background:#f0f0f0"><div style="position:absolute;left:0;top:37px;width:542px;height:142px;background:#fff"></div></div>
<div class="t" style="left:929.86px;top:613.00px;font-size:15px;line-height:15px;color:#7a7a7a;transform:scaleX(0.9447);">EC-Engineer</div>
<svg style="position:absolute;left:1434px;top:614px;" width="12" height="12" viewBox="0 0 12 12"><path d="M0.5 0.5 L11.5 11.5 M11.5 0.5 L0.5 11.5" stroke="#555" stroke-width="1"/></svg>
<svg style="position:absolute;left:949px;top:672.5px;" width="38" height="38" viewBox="0 0 38 38"><defs><linearGradient id="ib" x1="0" y1="0" x2="1" y2="1"><stop offset="0" stop-color="#7aa2f0"/><stop offset="0.45" stop-color="#3b62cc"/><stop offset="1" stop-color="#1c36b4"/></linearGradient><linearGradient id="ir" x1="0" y1="0" x2="0" y2="1"><stop offset="0" stop-color="#e8e8e8"/><stop offset="1" stop-color="#9a9a9a"/></linearGradient><linearGradient id="is" x1="0" y1="0" x2="1" y2="0"><stop offset="0" stop-color="#f5f5f5"/><stop offset="0.5" stop-color="#b5b5b5"/><stop offset="1" stop-color="#f0f0f0"/></linearGradient></defs><circle cx="19" cy="19" r="18.8" fill="#8c8c8c"/><circle cx="19" cy="19" r="17.8" fill="url(#ir)"/><circle cx="19" cy="19" r="15.9" fill="#3a4a7a"/><circle cx="19" cy="19" r="15.3" fill="url(#ib)"/><path d="M4.5 22 C8 14 16 10 33.5 11 C31 6 25.5 4 19 4 C11 4 4 10.5 4 19 Z" fill="#ffffff" opacity="0.13"/><circle cx="19" cy="9.3" r="2.9" fill="#fff"/><rect x="16.6" y="14.2" width="4.9" height="17.2" rx="0.6" fill="url(#is)"/></svg>
<div class="t" style="left:999.12px;top:675.00px;font-size:14px;line-height:14px;color:#000;transform:scaleX(0.9804);">Bad Connection:</div>
<div class="t" style="left:1000.10px;top:694.60px;font-size:14px;line-height:14px;color:#000;transform:scaleX(0.9783);">- Check connection between SubDevice &#x27;1005&#x27; and SubDevice &#x27;1002&#x27;</div>
<div class="t" style="left:999.11px;top:732.20px;font-size:14px;line-height:14px;color:#000;transform:scaleX(0.9946);">For more information please refer to the manual.</div>
<div style="position:absolute;left:1339px;top:796px;width:100px;height:34px;background:#f4f4f4;border:1px solid #adadad;border-right-color:#6f6f6f;border-bottom-color:#6f6f6f;box-sizing:border-box"></div>
<div class="t" style="left:1379.50px;top:805.00px;font-size:14px;line-height:14px;color:#000;transform:scaleX(0.9250);">OK</div>
<div style="position:absolute;left:0px;top:0px;width:1844px;height:1px;background:#6b6b6b"></div>
<div style="position:absolute;left:0px;top:0px;width:1px;height:1380px;background:#6b6b6b"></div>
<div style="position:absolute;left:1843px;top:0px;width:1px;height:1380px;background:#6b6b6b"></div>
<div style="position:absolute;left:0px;top:1379px;width:1844px;height:1px;background:#6b6b6b"></div>
</body></html>
